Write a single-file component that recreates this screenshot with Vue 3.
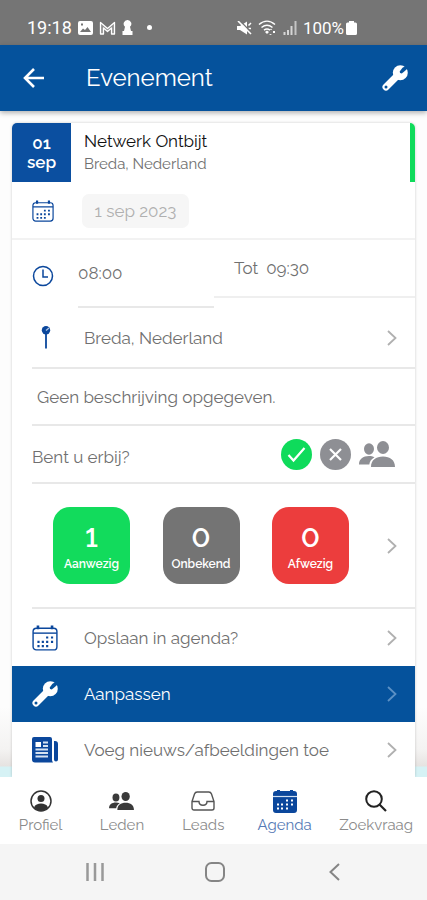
<script setup>
import { ref } from 'vue'

const date = ref('1 sep 2023')
const from = ref('08:00')
const until = ref('09:30')

const counts = [
  { value: 1, label: 'Aanwezig', tone: 'present' },
  { value: 0, label: 'Onbekend', tone: 'unknown' },
  { value: 0, label: 'Afwezig', tone: 'absent' }
]

const tabs = [
  { id: 'profile', label: 'Profiel' },
  { id: 'members', label: 'Leden' },
  { id: 'leads', label: 'Leads' },
  { id: 'agenda', label: 'Agenda' },
  { id: 'search', label: 'Zoekvraag' }
]
</script>

<template>
  <div class="app">
    <svg class="defs" width="0" height="0" aria-hidden="true">
      <mask id="wrench-cut" maskUnits="userSpaceOnUse" x="0" y="0" width="26" height="26">
        <path fill="#fff" d="M0 0h26v26H0z" />
        <path d="M27-1 20.500 2.800l-2.800 3.700.4 1.600 1.700.3 3.600-3L27 2z" />
        <circle cx="4" cy="22" r="1.500" />
      </mask>
      <symbol id="wrench" viewBox="0 0 26 26">
        <g mask="url(#wrench-cut)">
          <circle cx="18.300" cy="7.700" r="7.500" fill="currentColor" />
          <path d="M4 22 15 11" stroke="currentColor" stroke-width="7" stroke-linecap="round" />
        </g>
      </symbol>
      <symbol id="calendar" viewBox="0 0 24 24">
        <g fill="none" stroke="currentColor">
          <rect x="1" y="3" width="22" height="20" rx="3" stroke-width="1.300" />
          <path d="M1 7.500h22" stroke-width="1.300" />
          <path d="M5.500.5V4M18.500.5V4" stroke-width="2.400" />
          <path d="M13 11.500h2m2.500 0h2M5 15.500h2m2 0h2m2 0h2m2.500 0h2M5 19.500h2m2 0h2m2 0h2" stroke-width="2" />
        </g>
      </symbol>
      <symbol id="people" viewBox="0 0 36 26">
        <g fill="currentColor">
          <ellipse cx="24" cy="6.500" rx="6" ry="6.500" />
          <ellipse cx="10" cy="8" rx="5" ry="5.700" />
          <path d="M12 26c0-7 5-10.500 12-10.500S36 19 36 26zM0 23.500C0 18 4 15 10 15c2 0 4 .4 5.500 1.200-3 1.800-4.800 4-5.200 7.300z" />
        </g>
      </symbol>
      <symbol id="chevron" viewBox="0 0 10 16">
        <path d="M1 1 8.500 8 1 15" fill="none" stroke="currentColor" stroke-width="1.800" />
      </symbol>
    </svg>

    <div class="status">
      <span class="clock">19:18</span>
      <svg width="15" height="14" viewBox="0 0 15 14"><path fill="#fff" fill-rule="evenodd" d="M2 0h11a2 2 0 0 1 2 2v10a2 2 0 0 1-2 2H2a2 2 0 0 1-2-2V2a2 2 0 0 1 2-2zm0 11h11L9.500 6 7 9 5 7.500zM3 2.500v2h2v-2z" /></svg>
      <svg width="17" height="14" viewBox="0 0 17 14"><path d="M1.500 13V1.500l7 6 7-6V13h-3V7l-4 3.500L4.500 7v6z" fill="#8f8f8f" stroke="#fff" stroke-width="1.300" stroke-linejoin="round" /></svg>
      <svg width="11" height="15" viewBox="0 0 11 15"><path fill="#fff" d="M5.500 0a3.800 3.800 0 0 1 2.500 6.700L9 11h1.500v4H.5v-4H2l1-4.300A3.800 3.800 0 0 1 5.500 0z" /></svg>
      <span class="dot"></span>
      <span class="spacer"></span>
      <svg width="15" height="14" viewBox="0 0 15 14"><path fill="#fff" d="M0 5h3l7-4.500v13L3 9H0z" /><path d="M11.500 4.500 14 2M11.500 7.500H14" stroke="#fff" stroke-width="1.500" /><path d="m2.500-.5 12 12" stroke="#757575" stroke-width="1.500" /><path d="m1 0 13 13" stroke="#fff" stroke-width="1.600" /></svg>
      <svg width="19" height="15" viewBox="0 0 19 15"><g fill="none" stroke="#fff" stroke-width="1.500"><path d="M1 4.500c5-4.500 11-4.500 16 0M3.500 7.500c4-3.300 7-3.300 11 0M6 10.200c2-1.600 4-1.600 6 0" /></g><path fill="#fff" d="m7 12 2-1.500 2 1.500-2 2zM12 10h2l-1-1.500zM15 11h2v2h-2zM11 14l3 0-1.500 1z" /></svg>
      <svg width="14" height="14" viewBox="0 0 14 14"><path d="M1.500 14v-3M5 14V9M8.500 14V5" stroke="#d5d5d5" stroke-width="2" /><path d="M12.500 14V0" stroke="#c4c4c4" stroke-width="2" /></svg>
      <span class="percent">100%</span>
      <svg width="11" height="14" viewBox="0 0 11 14"><path fill="#fff" d="M3 0h5v1.500h1.500A1.500 1.500 0 0 1 11 3v9.500A1.500 1.500 0 0 1 9.500 14h-8A1.500 1.500 0 0 1 0 12.500V3a1.500 1.500 0 0 1 1.500-1.500H3z" /></svg>
    </div>

    <header class="bar">
      <button class="plain" aria-label="Terug">
        <svg width="22" height="20" viewBox="0 0 22 20"><path d="M11 1 2 10l9 9M2 10h19" fill="none" stroke="#fff" stroke-width="2.600" /></svg>
      </button>
      <h1>Evenement</h1>
      <button class="plain" aria-label="Aanpassen"><svg width="26" height="26"><use href="#wrench" /></svg></button>
    </header>

    <main>
      <section class="card">
        <div class="head">
          <div class="badge"><span>01</span><span>sep</span></div>
          <div class="title">
            <h2>Netwerk Ontbijt</h2>
            <p>Breda, Nederland</p>
          </div>
        </div>

        <div class="date">
          <svg class="ink" width="22" height="22"><use href="#calendar" /></svg>
          <input v-model="date" type="text" aria-label="Datum" disabled>
        </div>

        <div class="times">
          <svg class="ink clock-icon" width="22" height="22" viewBox="0 0 22 22"><g fill="none" stroke="currentColor" stroke-width="1.500"><circle cx="11" cy="11" r="9.500" /><path d="M11 4.500V12h5" /></g></svg>
          <input v-model="from" class="from" type="text" aria-label="Van">
          <label class="until">Tot <input v-model="until" type="text"></label>
        </div>

        <button class="row place">
          <span class="icon"><svg class="ink pin" width="10" height="23" viewBox="0 0 10 23"><circle cx="5" cy="4.200" r="4.200" fill="currentColor" /><path d="M5 7v15.500" stroke="currentColor" stroke-width="1.800" /><path d="M5 4.500 8 2" stroke="#b5c9e5" stroke-width="1.300" /></svg></span>
          <span class="text">Breda, Nederland</span>
          <svg class="chev" width="10" height="16"><use href="#chevron" /></svg>
        </button>

        <p class="row description">Geen beschrijving opgegeven.</p>

        <div class="row attend">
          <span class="text">Bent u erbij?</span>
          <button class="plain" aria-label="Ja"><svg width="31" height="31" viewBox="0 0 31 31"><circle cx="15.500" cy="15.500" r="15.500" fill="#0fdb5b" /><path d="m7.500 16 5 5.500L23.500 9" fill="none" stroke="#fff" stroke-width="2.200" /></svg></button>
          <button class="plain" aria-label="Nee"><svg width="31" height="31" viewBox="0 0 31 31"><circle cx="15.500" cy="15.500" r="15.500" fill="#8e8f94" /><path d="m10 10 11 11m0-11-11 11" stroke="#fff" stroke-width="2.200" /></svg></button>
          <button class="plain guests" aria-label="Gasten"><svg width="36" height="26"><use href="#people" /></svg></button>
        </div>

        <button class="row counts">
          <span class="tiles">
            <span v-for="c in counts" :key="c.label" class="tile" :class="c.tone">
              <strong>{{ c.value }}</strong>
              <span>{{ c.label }}</span>
            </span>
          </span>
          <svg class="chev" width="10" height="16"><use href="#chevron" /></svg>
        </button>

        <button class="row save">
          <span class="icon"><svg class="ink" width="26" height="26"><use href="#calendar" /></svg></span>
          <span class="text">Opslaan in agenda?</span>
          <svg class="chev" width="10" height="16"><use href="#chevron" /></svg>
        </button>
        <button class="row edit">
          <span class="icon"><svg width="26" height="26"><use href="#wrench" /></svg></span>
          <span class="text">Aanpassen</span>
          <svg class="chev" width="10" height="16"><use href="#chevron" /></svg>
        </button>
        <button class="row news">
          <span class="icon"><svg class="ink" width="26" height="26" viewBox="0 0 26 26"><path fill="currentColor" d="M2 0h16a2 2 0 0 1 2 2v21a5 5 0 0 0 1 2.500H3a3 3 0 0 1-3-3V2a2 2 0 0 1 2-2zM22 4h1a3 3 0 0 1 3 3v15.500a2 2 0 0 1-4 0z" /><path fill="#fff" d="M3.500 5H9v5H3.500z" /><path d="M11 5.500h5M11 9h5M3.500 12.500H16M3.500 16H16M3.500 19.500H16" stroke="#d5e2f1" stroke-width="1.800" /></svg></span>
          <span class="text">Voeg nieuws/afbeeldingen toe</span>
          <svg class="chev" width="10" height="16"><use href="#chevron" /></svg>
        </button>
      </section>
    </main>

    <nav class="tabs">
      <a v-for="t in tabs" :key="t.id" href="#" :class="{ active: t.id === 'agenda' }">
        <svg v-if="t.id === 'profile'" width="22" height="22" viewBox="0 0 22 22"><circle cx="11" cy="11" r="10" fill="none" stroke="#333" stroke-width="1.500" /><circle cx="11" cy="8.500" r="3.500" fill="#333" /><path d="M4 17.500c1-3 4-4 7-4s6 1 7 4c-3.500 4.500-10.500 4.500-14 0z" fill="#333" /></svg>
        <svg v-else-if="t.id === 'members'" class="dark" width="25" height="18"><use href="#people" /></svg>
        <svg v-else-if="t.id === 'leads'" width="24" height="20" viewBox="0 0 24 20"><path d="M1 10.500 3.500 3a3 3 0 0 1 3-2h11a3 3 0 0 1 3 2L23 10.500V17a2 2 0 0 1-2 2H3a2 2 0 0 1-2-2zm0 0h7c0 5 8 5 8 0h7" fill="none" stroke="#555" stroke-width="1.400" /></svg>
        <svg v-else-if="t.id === 'agenda'" class="ink" width="24" height="23" viewBox="0 0 24 23"><path fill="currentColor" d="M4 1V0h3v1h10V0h3v1h1a3 3 0 0 1 3 3v16a3 3 0 0 1-3 3H3a3 3 0 0 1-3-3V4a3 3 0 0 1 3-3z" /><path d="M0 6.500h24" stroke="#d3e1f2" stroke-width="1.200" /><path d="M13 10.500h2m3 0h2M4 14.500h2m2 0h2m3 0h2m3 0h2M4 18.500h2m2 0h2m3 0h2" stroke="#fff" stroke-width="2" /></svg>
        <svg v-else width="22" height="22" viewBox="0 0 22 22"><circle cx="9" cy="9" r="7.800" fill="none" stroke="#222" stroke-width="2" /><path d="m14.500 14.500 6.500 6.500" stroke="#222" stroke-width="2.200" /></svg>
        <span>{{ t.label }}</span>
      </a>
    </nav>

    <div class="system">
      <button class="plain" aria-label="Recente apps"><svg width="18" height="18" viewBox="0 0 18 18"><path d="M1.500 0v18M9 0v18M16.500 0v18" stroke="#999" stroke-width="2.500" /></svg></button>
      <button class="plain" aria-label="Startscherm"><svg width="20" height="20" viewBox="0 0 20 20"><rect x="1" y="1" width="18" height="18" rx="5.500" fill="none" stroke="#858585" stroke-width="2" /></svg></button>
      <button class="plain" aria-label="Vorige"><svg width="11" height="18" viewBox="0 0 11 18"><path d="M10 1 1.500 9l8.500 8" fill="none" stroke="#858585" stroke-width="2" /></svg></button>
    </div>
  </div>
</template>

<style>
body {
  background: #fff;
}
</style>

<style scoped>
.app {
  display: flex;
  flex-direction: column;
  min-height: 100vh;
  font-family: Raleway, Lato, "Open Sans", sans-serif;
  font-size: 17px;
  color: #707070;
}
.app * {
  box-sizing: border-box;
}
.defs {
  position: absolute;
}
svg {
  display: block;
  flex: none;
}
button,
input {
  font: inherit;
  color: inherit;
  border: 0;
  padding: 0;
  background: none;
  text-align: left;
}
h1,
h2,
p {
  margin: 0;
  font-weight: 400;
}
.plain {
  color: inherit;
}
.ink {
  color: #0b479c;
}
.status {
  display: flex;
  align-items: center;
  gap: 6px;
  height: 45px;
  padding: 10px 70px 0 27px;
  background: #757575;
  color: #fff;
  font-family: Roboto, sans-serif;
  font-size: 18px;
}
.percent {
  font-size: 17px;
}
.dot {
  width: 5px;
  height: 5px;
  margin-left: 8px;
  border-radius: 50%;
  background: #fff;
}
.spacer {
  flex: 1;
}
.percent {
  margin-right: -4px;
}
.bar {
  display: flex;
  align-items: center;
  height: 66px;
  padding: 0 19px 0 23px;
  background: #05529c;
  color: #fff;
  box-shadow: 0 2px 5px rgba(0, 0, 0, 0.3);
  z-index: 1;
}
.bar h1 {
  flex: 1;
  padding-left: 41px;
  font-size: 24px;
  line-height: 30px;
}
main {
  flex: 1;
  padding: 12px 12px 0;
  background: linear-gradient(to top, #d6f2f5 10px, #e6e3e1 11px, #f4f3f2 28px, #fdfdfd 70px);
}
.card {
  border-radius: 5px 5px 0 0;
  background: #fff;
  box-shadow: 0 0 3px rgba(0, 0, 0, 0.2);
  overflow: hidden;
}
.head {
  display: flex;
  height: 59px;
  border-right: 5px solid #0fdb5b;
}
.badge {
  display: flex;
  flex-direction: column;
  justify-content: center;
  width: 59px;
  background: #0b4fa0;
  color: #fff;
  font-size: 17px;
  font-weight: 600;
  line-height: 19px;
  text-align: center;
}
.title {
  padding: 6px 0 0 13px;
  font-size: 15px;
  line-height: 23px;
}
.title h2 {
  font-size: 17px;
  line-height: 24px;
  color: #111;
}
.date {
  display: flex;
  align-items: center;
  gap: 28px;
  height: 58px;
  padding: 2px 0 0 20px;
  border-bottom: 2px solid #f2f2f2;
}
.date input {
  width: 107px;
  height: 34px;
  border-radius: 7px;
  background: #f6f6f6;
  color: #b0b0b0;
  text-align: center;
}
.times {
  display: flex;
  align-items: flex-start;
  padding-left: 20px;
}
.clock-icon {
  margin: 25px 24px 0 0;
}
.times .from {
  width: 136px;
  height: 68px;
  border-bottom: 2px solid #e8e8e8;
}
.until {
  display: flex;
  align-items: center;
  flex: 1;
  gap: 8px;
  height: 58px;
  padding-left: 20px;
  border-bottom: 2px solid #efefef;
}
.until input {
  width: 80px;
}
.row {
  display: flex;
  align-items: center;
  width: calc(100% - 20px);
  margin-left: 20px;
  padding-right: 18px;
  border-bottom: 2px solid #e8e8e8;
}
.icon {
  width: 52px;
}
.text {
  flex: 1;
}
.chev {
  color: #b0b0b0;
}
.place {
  height: 61px;
}
.pin {
  margin-left: 9px;
}
.description {
  height: 57px;
  padding-left: 5px;
}
.attend {
  gap: 8px;
  height: 58px;
  padding-right: 20px;
}
.attend .text {
  padding-top: 6px;
}
.guests {
  color: #8e8f94;
}
.counts {
  height: 125px;
}
.tiles {
  display: flex;
  flex: 1;
  justify-content: space-between;
  padding: 0 38px 0 21px;
}
.tile {
  display: flex;
  flex-direction: column;
  align-items: center;
  width: 77px;
  height: 77px;
  padding-top: 14px;
  border-radius: 17px;
  color: #fff;
  font-size: 12px;
  font-weight: 600;
  line-height: 18px;
}
.tile strong {
  font-size: 27px;
  font-weight: 600;
  font-variant-numeric: lining-nums;
  line-height: 34px;
}
.present {
  background: #12db5c;
}
.unknown {
  background: #747474;
}
.absent {
  background: #ec3d3d;
}
.save {
  height: 57px;
  border: 0;
}
.edit {
  width: 100%;
  height: 56px;
  margin: 0;
  padding-left: 20px;
  border: 0;
  background: #05529c;
  color: #fff;
}
.edit .chev {
  color: #5c91c5;
}
.news {
  height: 55px;
  border: 0;
}
.tabs {
  display: grid;
  grid-template-columns: repeat(4, 4fr) 5fr;
  height: 67px;
  background: #fff;
}
.tabs a {
  display: grid;
  grid-template-rows: 24px 20px;
  align-content: start;
  place-items: center;
  gap: 2px;
  padding-top: 12px;
  color: #8b8b8b;
  font-size: 15px;
  line-height: 20px;
  text-decoration: none;
}
.tabs .active {
  color: #5579b5;
}
.dark {
  color: #3a3a3a;
}
.system {
  display: flex;
  align-items: center;
  justify-content: center;
  gap: 100px;
  height: 56px;
  padding-left: 2px;
  background: #f5f5f5;
}
.system button {
  display: grid;
  place-items: center;
  width: 20px;
}
</style>
